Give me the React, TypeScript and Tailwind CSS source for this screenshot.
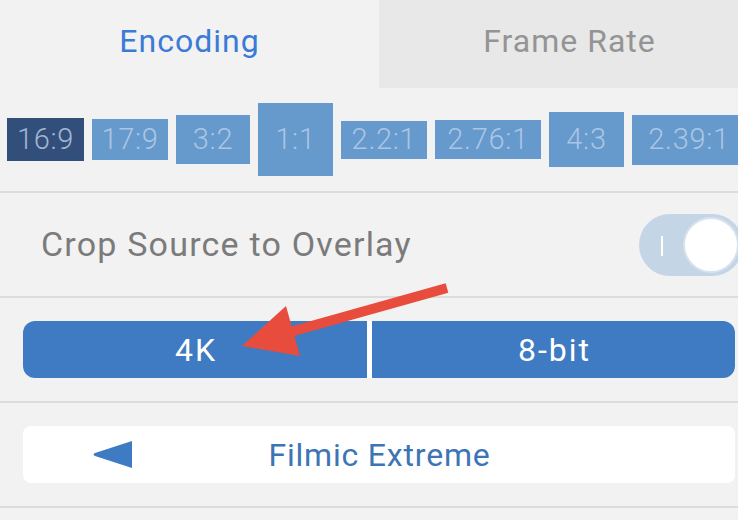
import React from "react";

const ratios = [
  { label: "16:9", w: 77, h: 43, dark: true },
  { label: "17:9", w: 76, h: 41 },
  { label: "3:2", w: 74, h: 49 },
  { label: "1:1", w: 75, h: 73 },
  { label: "2.2:1", w: 86, h: 38 },
  { label: "2.76:1", w: 106, h: 39 },
  { label: "4:3", w: 75, h: 55 },
  { label: "2.39:1", w: 122, h: 50 },
];

export default function App() {
  return (
    <div
      className="relative w-[738px] h-[520px] overflow-hidden bg-[#f2f2f2]"
      style={{ fontFamily: "Roboto, 'Liberation Sans', sans-serif" }}
    >
      {/* Tabs */}
      <div className="flex h-[88px]">
        <div className="w-[379px] flex items-center justify-center pb-[6px] bg-[#f2f2f2] text-[#3a7bd8] text-[32px] tracking-[1px]">
          Encoding
        </div>
        <div className="flex-1 flex items-center justify-center pb-[6px] pl-[22px] bg-[#e8e8e8] text-[#949494] text-[32px] tracking-[1px]">
          Frame Rate
        </div>
      </div>

      {/* Aspect ratios */}
      <div className="h-[103px] flex items-center gap-[8px] pl-[7px] whitespace-nowrap">
        {ratios.map((r) => (
          <div
            key={r.label}
            className={
              "shrink-0 flex items-center justify-center text-[29px] font-light tracking-[0.7px] " +
              (r.dark ? "bg-[#324f7c] text-[#a3b6d0]" : "bg-[#6699cc] text-[#abc6e5]")
            }
            style={{ width: r.w, height: r.h }}
          >
            <span className={r.label === "2.39:1" ? "pr-[8px]" : ""}>{r.label}</span>
          </div>
        ))}
      </div>
      <div className="h-[2px] bg-[#dcdcdc]" />

      {/* Crop row */}
      <div className="h-[103px] flex items-center justify-between pl-[41px]">
        <span className="text-[34px] tracking-[1.2px] text-[#7b7b7b]">Crop Source to Overlay</span>
        <div className="relative w-[104px] h-[62px] mr-[-5px] rounded-full bg-[#c4d5e6] shrink-0">
          <div className="absolute left-[22px] top-[22px] w-[2px] h-[20px] bg-white" />
          <div className="absolute left-[44px] top-[3px] w-[56px] h-[56px] rounded-full bg-white border-[2px] border-[#d6e2ee]" />
        </div>
      </div>
      <div className="h-[2px] bg-[#dcdcdc]" />

      {/* 4K / 8-bit */}
      <div className="h-[103px] flex items-center pl-[23px] pr-[3px]">
        <div className="flex w-full h-[57px] rounded-[12px] overflow-hidden bg-white">
          <div className="w-[344px] flex items-center justify-center pl-[2px] bg-[#3f7bc2] text-white text-[32px] tracking-[2px]">
            4K
          </div>
          <div className="w-[5px]" />
          <div className="flex-1 flex items-center justify-center pl-[2px] bg-[#3f7bc2] text-white text-[32px] tracking-[2px]">
            8-bit
          </div>
        </div>
      </div>
      <div className="h-[2px] bg-[#dcdcdc]" />

      {/* Filmic Extreme */}
      <div className="h-[103px] flex items-center pl-[23px] pr-[3px]">
        <div className="relative flex w-full h-[57px] rounded-[8px] bg-white items-center justify-center pl-[1px] text-[#3d74b6] text-[32px] tracking-[0.8px]">
          <svg className="absolute left-[69px] top-[14px]" width="41" height="29" viewBox="0 0 41 29">
            <path d="M40 1 L40 28 L3 16 Q0 14.5 3 13 Z" fill="#3f7bc2" strokeLinejoin="round" />
          </svg>
          Filmic Extreme
        </div>
      </div>
      <div className="h-[2px] bg-[#dcdcdc]" />

      {/* Red arrow overlay */}
      <svg className="absolute left-0 top-0 pointer-events-none" width="738" height="520">
        <line x1="447" y1="288" x2="290" y2="332" stroke="#e84c3d" strokeWidth="10" />
        <polygon points="242,346 286,306 300,356" fill="#e84c3d" />
      </svg>
    </div>
  );
}
